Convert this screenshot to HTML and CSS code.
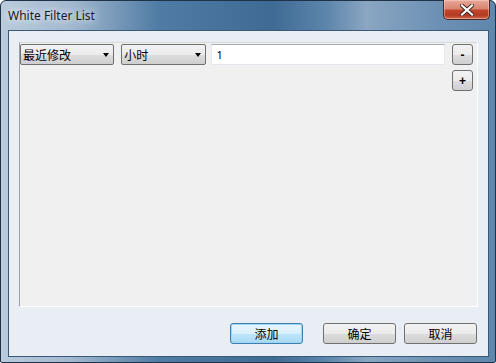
FILE: index.html
```html
<!DOCTYPE html>
<html lang="zh-CN">

<head>
  <meta charset="UTF-8">
  <title>White Filter List</title>
  <link rel="stylesheet" href="styles.css">
</head>

<body>
  <div class="window">
    <div class="titlebar">
      <span class="title">White Filter List</span>
      <button class="close-btn">
        <svg width="14" height="12" viewBox="0 0 14 12">
          <path d="M2 1.5 L12 10.5 M12 1.5 L2 10.5" stroke="#3a2620" stroke-width="4" stroke-linecap="square" />
          <path d="M2 1.5 L12 10.5 M12 1.5 L2 10.5" stroke="#fff" stroke-width="2.2" stroke-linecap="square" />
        </svg>
      </button>
    </div>

    <div class="client">
      <div class="list-panel">
        <div class="filter-row">
          <div class="combo combo-field">
            <span>最近修改</span>
            <span class="arrow"></span>
          </div>
          <div class="combo combo-unit">
            <span>小时</span>
            <span class="arrow"></span>
          </div>
          <input class="value-input" type="text" value="1">
          <button class="small-btn">-</button>
        </div>
        <div class="add-row">
          <button class="small-btn plus">+</button>
        </div>
      </div>

      <div class="button-row">
        <button class="btn default">添加</button>
        <button class="btn ok">确定</button>
        <button class="btn">取消</button>
      </div>
    </div>
  </div>
</body>

</html>
```

FILE: styles.css
```css
body {
  margin: 0;
  width: 496px;
  height: 363px;
  background: #ffffff;
  font-family: "Noto Sans", "Noto Sans CJK SC", sans-serif;
  overflow: hidden;
}

.window {
  box-sizing: border-box;
  width: 496px;
  height: 363px;
  padding: 0 6px 7px 7px;
  border: 1px solid #1f3247;
  border-radius: 6px 6px 2px 2px;
  background: linear-gradient(90deg, #b9cbdc 0%, #a3b9cf 14%, #4f7ba4 32%, #3f6a93 55%, #5d86ac 66%, #8aa6c2 74%, #6d91b4 88%, #5f86ac 100%);
  display: flex;
  flex-direction: column;
}

.titlebar {
  height: 29px;
  display: flex;
  align-items: flex-start;
  justify-content: space-between;
  flex-shrink: 0;
}

.title {
  margin-top: 6px;
  font-size: 12px;
  color: #1a1a1a;
  text-shadow: 0 0 6px #e8eef5, 0 0 10px #dfe7f0;
}

.close-btn {
  width: 47px;
  height: 20px;
  margin-top: -1px;
  margin-right: -1px;
  padding: 0;
  border: 1px solid #4a2a26;
  border-top: none;
  border-radius: 0 0 5px 5px;
  background: linear-gradient(180deg, #e9a898 0%, #d98672 45%, #c2442b 55%, #b53a22 80%, #d06a4e 100%);
  box-shadow: inset 0 0 0 1px rgba(255, 220, 210, 0.45);
  display: flex;
  align-items: center;
  justify-content: center;
}

.client {
  flex: 1;
  border: 1px solid #3b5877;
  background: #e9edf4;
  padding: 11px 10px 12px 10px;
  display: flex;
  flex-direction: column;
}

.list-panel {
  height: 262px;
  border-top: 1px solid #d7d9dc;
  border-left: 1px solid #a0a0a0;
  border-right: 1px solid #ffffff;
  border-bottom: 1px solid #ffffff;
  background: #f0f0f0;
  padding: 1px 4px 0 0;
}

.filter-row {
  display: flex;
  align-items: center;
}

.combo {
  box-sizing: border-box;
  height: 21px;
  border: 1px solid #707070;
  border-radius: 2px;
  background: linear-gradient(180deg, #f2f2f2 0%, #ebebeb 50%, #dddddd 51%, #cfcfcf 100%);
  display: flex;
  align-items: center;
  justify-content: space-between;
  padding: 0 4px 0 2px;
  font-family: "Noto Sans CJK SC", sans-serif;
  font-size: 12px;
  color: #000;
}

.combo-field {
  width: 95px;
  margin-right: 7px;
}

.combo-unit {
  width: 86px;
  margin-right: 5px;
}

.arrow {
  width: 0;
  height: 0;
  border-left: 3.5px solid transparent;
  border-right: 3.5px solid transparent;
  border-top: 4px solid #000;
}

.value-input {
  box-sizing: border-box;
  width: 236px;
  height: 21px;
  margin: 0 7px 0 0;
  border: 1px solid #e3e9ef;
  border-top-color: #abadb3;
  background: #ffffff;
  padding: 0 4px;
  font-family: "Noto Sans", sans-serif;
  font-size: 11px;
  color: #000;
  outline: none;
}

.small-btn {
  box-sizing: border-box;
  width: 21px;
  height: 21px;
  padding: 0;
  border: 1px solid #707070;
  border-radius: 3px;
  background: linear-gradient(180deg, #f2f2f2 0%, #ebebeb 50%, #dddddd 51%, #cfcfcf 100%);
  font-family: "Liberation Sans", sans-serif;
  font-size: 12px;
  font-weight: bold;
  color: #000;
  line-height: 1;
}

.add-row {
  display: flex;
  justify-content: flex-end;
  margin-top: 5px;
}

.button-row {
  display: flex;
  justify-content: flex-end;
  margin-top: 16px;
  padding-right: 1px;
}

.btn {
  box-sizing: border-box;
  width: 73px;
  height: 21px;
  padding: 0;
  border: 1px solid #707070;
  border-radius: 3px;
  background: linear-gradient(180deg, #f2f2f2 0%, #ebebeb 50%, #dddddd 51%, #cfcfcf 100%);
  font-family: "Noto Sans CJK SC", sans-serif;
  font-size: 12px;
  color: #000;
}

.btn.default {
  border-color: #3c7fb1;
  background: linear-gradient(180deg, #eaf6fd 0%, #d9f0fc 50%, #bee6fd 51%, #a7d9f5 100%);
  box-shadow: inset 0 0 0 1px #9fd6f6;
  margin-right: 20px;
}

.btn.ok {
  margin-right: 8px;
}
```
